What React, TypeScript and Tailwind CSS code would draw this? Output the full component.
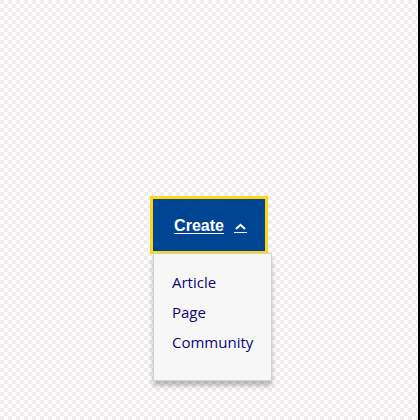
import React from "react";

const items = ["Article", "Page", "Community"];

export default function App() {
  return (
    <main className="flex min-h-screen items-start justify-center border-r-2 border-black bg-[conic-gradient(#fff_25%,#f0ebed_0_50%,#fff_0_75%,#f0ebed_0)] bg-[length:8px_8px] pt-[196px]">
      <div className="relative">
        <button
          type="button"
          aria-expanded="true"
          aria-controls="create-menu"
          className="flex h-[58px] w-[118px] items-center justify-center border-3 border-[#ffd617] bg-[#004494] pt-0.5 pl-[3px] font-['Liberation_Sans',Arial,sans-serif] text-[16px] font-bold text-white"
        >
          <span className="underline underline-offset-2 decoration-1">Create</span>
          <svg className="ml-2.5 h-4 w-[13px]" viewBox="0 0 13 16" fill="none" stroke="currentColor" aria-hidden="true">
            <path d="M2 11 6.5 6.8 11 11" strokeWidth="2" />
            <path d="M0 14.5h13" />
          </svg>
        </button>
        <nav
          id="create-menu"
          aria-label="Create"
          className="absolute top-[57px] left-[3px] border border-[#d2d2d2] bg-[#f7f7f7] px-[18px] pt-[13px] pb-[23px] shadow-[0_5px_5px_rgba(0,0,0,0.25)]"
        >
          <ul className="w-[81px] font-['Open_Sans','Noto_Sans',sans-serif] text-[15px] leading-[30px] text-[#0d047c]">
            {items.map((item) => (
              <li key={item}>
                <a href={`#${item.toLowerCase()}`}>{item}</a>
              </li>
            ))}
          </ul>
        </nav>
      </div>
    </main>
  );
}
